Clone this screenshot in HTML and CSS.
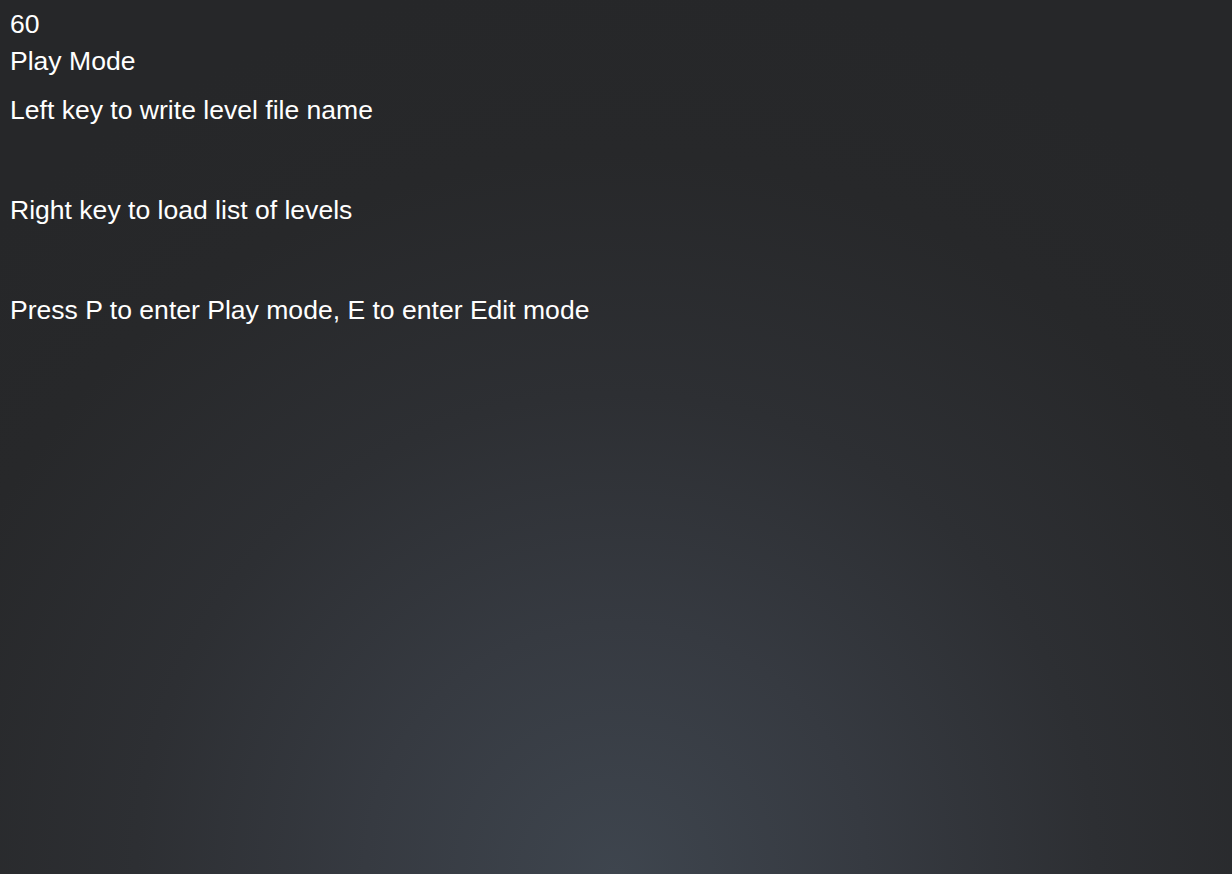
FILE: index.html
```html
<!DOCTYPE html>
<html>
<head>
<meta charset="utf-8">
<link rel="stylesheet" href="styles.css">
</head>
<body>
<main class="screen">
  <div class="line fps">60</div>
  <div class="line mode">Play Mode</div>
  <div class="line hint-left">Left key to write level file name</div>
  <div class="line hint-right">Right key to load list of levels</div>
  <div class="line hint-mode">Press P to enter Play mode, E to enter Edit mode</div>
</main>
</body>
</html>
```
FILE: styles.css
```css
html, body {
  margin: 0;
  padding: 0;
  width: 1232px;
  height: 874px;
  overflow: hidden;
}
body {
  background: radial-gradient(circle at 50% 100%, #3e454e 0px, #363a41 250px, #2d2f33 480px, #27282a 720px, #262729 900px);
  font-family: "Liberation Sans", Arial, sans-serif;
  color: #ffffff;
}
.screen {
  display: flex;
  flex-direction: column;
  align-items: flex-start;
  padding: 9px 0 0 10px;
}
.line {
  font-size: 26.55px;
  line-height: 30px;
  white-space: nowrap;
}
.mode { margin-top: 7px; }
.hint-left { margin-top: 19px; }
.hint-right { margin-top: 70px; }
.hint-mode { margin-top: 70px; }
```
